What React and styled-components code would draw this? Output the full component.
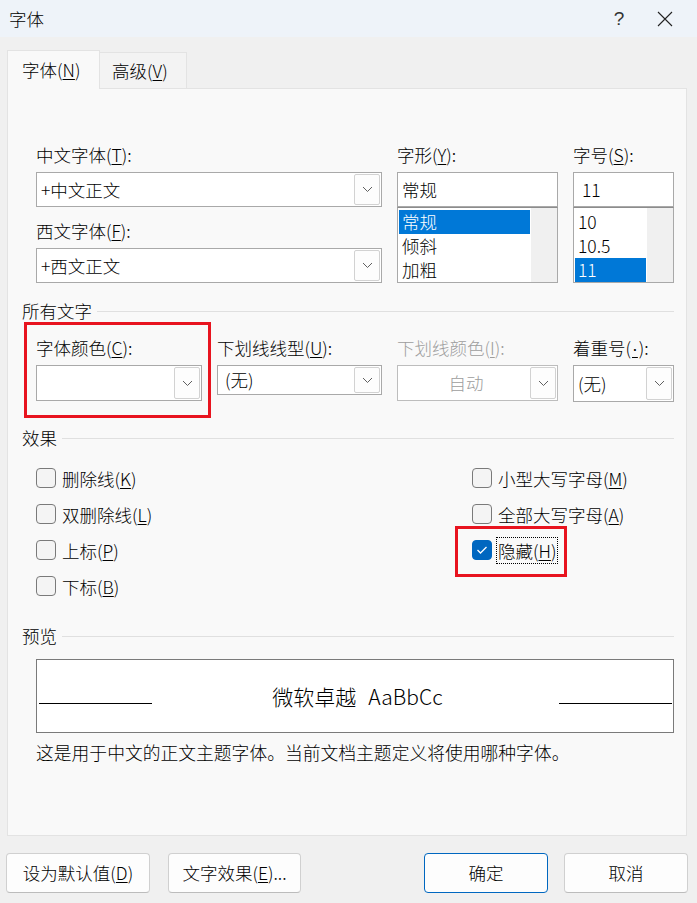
import React from 'react';
import styled, { createGlobalStyle, css } from 'styled-components';

const FONT = `"Noto Sans CJK SC", "Noto Sans", sans-serif`;

const Global = createGlobalStyle`
  html, body { margin: 0; padding: 0; background: #f0f0f0; }
  body { font-family: ${FONT}; font-size: 17.5px; font-weight: 300; color: #000; }
  * { box-sizing: border-box; }
  u { text-underline-offset: 2px; text-decoration-thickness: 1px; }
`;

const Window = styled.div`
  width: 697px;
  height: 903px;
  display: flex;
  flex-direction: column;
  background: #f0f0f0;
  overflow: hidden;
`;

const TitleBar = styled.div`
  height: 37px;
  flex: none;
  background: #eef3f9;
  display: flex;
  align-items: center;
  padding-left: 9px;
  padding-right: 9px;
`;

const Title = styled.div`
  flex: 1;
  line-height: 22px;
`;

const TitleButton = styled.div`
  width: 46px;
  height: 37px;
  display: flex;
  align-items: center;
  justify-content: center;
  font-family: "Liberation Sans", sans-serif;
  font-size: 19px;
  color: #333;
`;

const Body = styled.div`
  padding: 13px 0 0 7px;
  display: flex;
  flex-direction: column;
`;

const TabRow = styled.div`
  height: 38px;
  display: flex;
  align-items: flex-end;
  position: relative;
  z-index: 1;
`;

const Tab = styled.div`
  display: flex;
  align-items: center;
  border: 1px solid #e3e3e3;
  line-height: 22px;
  ${(p) =>
    p.$active
      ? css`
          height: 39px;
          margin-bottom: -1px;
          background: #f9f9f9;
          border-bottom: none;
          padding: 0 14px 0 14px;
          width: 93px;
        `
      : css`
          height: 36px;
          background: #f3f3f3;
          border-left: none;
          border-bottom: none;
          padding: 0 12px;
          width: 87px;
        `}
`;

const Panel = styled.div`
  width: 680px;
  height: 748px;
  background: #f9f9f9;
  border: 1px solid #e3e3e3;
  padding: 55px 12px 0 14px;
  display: flex;
  flex-direction: column;
`;

const FieldGrid = styled.div`
  margin-left: 14px;
  display: grid;
  grid-template-columns: 166px 165px 161px 101px;
  column-gap: 15px;
  margin-top: ${(p) => p.$mt || 0}px;
`;

const Column = styled.div`
  display: flex;
  flex-direction: column;
  grid-column: span ${(p) => p.$span || 1};
`;

const Label = styled.div`
  line-height: 22px;
  height: 22px;
  white-space: nowrap;
  color: ${(p) => (p.$disabled ? '#9d9d9d' : '#000')};
  margin-top: ${(p) => p.$mt || 0}px;
  margin-bottom: 6px;
`;

const Dot = styled.span`
  font-family: "Liberation Sans", sans-serif;
  padding: 0 1px;
`;

const Box = styled.div`
  height: ${(p) => p.$h || 35}px;
  background: #fff;
  border: 1px solid ${(p) => (p.$disabled ? '#bdbdbd' : '#a9a9a9')};
  display: flex;
  align-items: center;
  padding-left: ${(p) => (p.$pl != null ? p.$pl : 4)}px;
  line-height: 22px;
  white-space: nowrap;
`;

const BoxText = styled.span`
  flex: 1;
  color: ${(p) => (p.$disabled ? '#9d9d9d' : '#000')};
  text-align: ${(p) => (p.$center ? 'center' : 'left')};
`;

const DropButton = styled.div`
  width: 26px;
  align-self: stretch;
  margin: 1px 1px 1px 0;
  border: 1px solid #d2d2d2;
  border-radius: 2px;
  background: #fdfdfd;
  display: flex;
  align-items: center;
  justify-content: center;
`;

const ListBox = styled.div`
  height: 76px;
  background: #fff;
  border: 1px solid #a9a9a9;
  border-top-color: #8c8c8c;
  display: flex;
`;

const ListItems = styled.div`
  flex: 1;
  padding: 2px 1px;
  display: flex;
  flex-direction: column;
`;

const ListItem = styled.div`
  height: 24px;
  line-height: 24px;
  padding-left: 3px;
  background: ${(p) => (p.$selected ? '#0078d7' : 'transparent')};
  color: ${(p) => (p.$selected ? '#fff' : '#000')};
`;

const ScrollTrack = styled.div`
  width: 26px;
  background: #f0f0f0;
`;

const SectionHeader = styled.div`
  display: flex;
  align-items: center;
  gap: 5px;
  height: 22px;
  line-height: 22px;
  margin-top: ${(p) => p.$mt || 0}px;
  &::after {
    content: '';
    flex: 1;
    height: 1px;
    background: #e0e0e0;
  }
`;

const Annotated = styled.div`
  position: relative;
  &::after {
    content: '';
    position: absolute;
    top: ${(p) => -p.$t}px;
    right: ${(p) => -p.$r}px;
    bottom: ${(p) => -p.$b}px;
    left: ${(p) => -p.$l}px;
    border: 3px solid #e8141f;
    pointer-events: none;
  }
`;

const Effects = styled.div`
  margin-left: 14px;
  margin-top: 11px;
  display: grid;
  grid-template-columns: 436px 1fr;
`;

const EffectColumn = styled.div`
  display: flex;
  flex-direction: column;
  align-items: flex-start;
`;

const CheckRow = styled.div`
  height: 36px;
  display: flex;
  align-items: center;
  gap: 4px;
`;

const CheckBox = styled.div`
  width: 20px;
  height: 20px;
  border-radius: 4px;
  flex: none;
  display: flex;
  align-items: center;
  justify-content: center;
  ${(p) =>
    p.$checked
      ? css`
          background: #0067c0;
          border: 1px solid #0067c0;
        `
      : css`
          background: #f4f4f4;
          border: 1px solid #7a7a7a;
        `}
`;

const CheckLabel = styled.span`
  line-height: 23px;
  padding: 1px;
  border: 1px ${(p) => (p.$focus ? 'dotted #000' : 'solid transparent')};
  white-space: nowrap;
`;

const PreviewBox = styled.div`
  margin: 12px 0 0 14px;
  height: 74px;
  background: #fff;
  border: 1px solid #7a7a7a;
  display: flex;
  align-items: center;
  justify-content: space-between;
  padding: 0 1px 0 2px;
`;

const PreviewRule = styled.div`
  width: 113px;
  height: 1px;
  background: #000;
  margin-top: 14px;
`;

const PreviewText = styled.div`
  font-size: 21px;
  line-height: 28px;
  white-space: nowrap;
  margin-left: 4px;
`;

const Latin = styled.span`
  margin-left: 12px;
`;

const Description = styled.div`
  margin: 8px 0 0 14px;
  line-height: 22px;
  font-size: 17.8px;
  white-space: nowrap;
`;

const Footer = styled.div`
  display: flex;
  justify-content: space-between;
  padding: 17px 9px 0 6px;
`;

const ButtonGroup = styled.div`
  display: flex;
  gap: ${(p) => p.$gap}px;
`;

const Button = styled.div`
  width: ${(p) => p.$w}px;
  height: 40px;
  border-radius: 4px;
  background: #fdfdfd;
  border: 1px solid ${(p) => (p.$primary ? '#0067c0' : '#d0d0d0')};
  border-bottom-color: ${(p) => (p.$primary ? '#0067c0' : '#bcbcbc')};
  display: flex;
  align-items: center;
  justify-content: center;
  line-height: 22px;
  white-space: nowrap;
`;

const Chevron = () => (
  <svg width="11" height="7" viewBox="0 0 11 7">
    <polyline points="1,1 5.5,5.5 10,1" fill="none" stroke="#606060" strokeWidth="1" />
  </svg>
);

const Check = () => (
  <svg width="12" height="10" viewBox="0 0 12 10">
    <polyline points="1.5,5 4.5,8 10.5,2" fill="none" stroke="#fff" strokeWidth="1.3" />
  </svg>
);

const CloseIcon = () => (
  <svg width="16" height="16" viewBox="0 0 16 16">
    <path d="M1 1 L15 15 M15 1 L1 15" stroke="#222" strokeWidth="1.1" fill="none" />
  </svg>
);

const Combo = ({ value, h, pl, disabled, center }) => (
  <Box $h={h} $pl={pl} $disabled={disabled}>
    <BoxText $disabled={disabled} $center={center}>{value}</BoxText>
    <DropButton>
      <Chevron />
    </DropButton>
  </Box>
);

const List = ({ items, selected }) => (
  <ListBox>
    <ListItems>
      {items.map((it) => (
        <ListItem key={it} $selected={it === selected}>
          {it}
        </ListItem>
      ))}
    </ListItems>
    <ScrollTrack />
  </ListBox>
);

const Effect = ({ label, mn, checked, focus }) => (
  <CheckRow>
    <CheckBox $checked={checked}>{checked && <Check />}</CheckBox>
    <CheckLabel $focus={focus}>
      {label}(<u>{mn}</u>)
    </CheckLabel>
  </CheckRow>
);

export default function App() {
  return (
    <>
      <Global />
      <Window>
        <TitleBar>
          <Title>字体</Title>
          <TitleButton>?</TitleButton>
          <TitleButton>
            <CloseIcon />
          </TitleButton>
        </TitleBar>
        <Body>
          <TabRow>
            <Tab $active>
              字体(<u>N</u>)
            </Tab>
            <Tab>
              高级(<u>V</u>)
            </Tab>
          </TabRow>
          <Panel>
            <FieldGrid>
              <Column $span={2}>
                <Label>
                  中文字体(<u>T</u>):
                </Label>
                <Combo value="+中文正文" />
                <Label $mt={13}>
                  西文字体(<u>F</u>):
                </Label>
                <Combo value="+西文正文" />
              </Column>
              <Column>
                <Label>
                  字形(<u>Y</u>):
                </Label>
                <Box>常规</Box>
                <List items={['常规', '倾斜', '加粗']} selected="常规" />
              </Column>
              <Column>
                <Label>
                  字号(<u>S</u>):
                </Label>
                <Box $pl={8}>11</Box>
                <List items={['10', '10.5', '11']} selected="11" />
              </Column>
            </FieldGrid>

            <SectionHeader $mt={17}>所有文字</SectionHeader>

            <FieldGrid $mt={15}>
              <Annotated $t={15} $r={9} $b={16} $l={12}>
                <Column>
                  <Label>
                    字体颜色(<u>C</u>):
                  </Label>
                  <Combo value="" h={36} />
                </Column>
              </Annotated>
              <Column>
                <Label>
                  下划线线型(<u>U</u>):
                </Label>
                <Combo value="(无)" h={30} pl={7} />
              </Column>
              <Column>
                <Label $disabled>
                  下划线颜色(<u>I</u>):
                </Label>
                <Combo value="自动" h={36} disabled center />
              </Column>
              <Column>
                <Label>
                  着重号(<u><Dot>·</Dot></u>):
                </Label>
                <Combo value="(无)" h={37} pl={4} />
              </Column>
            </FieldGrid>

            <SectionHeader $mt={25}>效果</SectionHeader>

            <Effects>
              <EffectColumn>
                <Effect label="删除线" mn="K" />
                <Effect label="双删除线" mn="L" />
                <Effect label="上标" mn="P" />
                <Effect label="下标" mn="B" />
              </EffectColumn>
              <EffectColumn>
                <Effect label="小型大写字母" mn="M" />
                <Effect label="全部大写字母" mn="A" />
                <Annotated $t={6} $r={9} $b={9} $l={17}>
                  <Effect label="隐藏" mn="H" checked focus />
                </Annotated>
              </EffectColumn>
            </Effects>

            <SectionHeader $mt={21}>预览</SectionHeader>
            <PreviewBox>
              <PreviewRule />
              <PreviewText>
                微软卓越<Latin>AaBbCc</Latin>
              </PreviewText>
              <PreviewRule />
            </PreviewBox>
            <Description>这是用于中文的正文主题字体。当前文档主题定义将使用哪种字体。</Description>
          </Panel>
        </Body>
        <Footer>
          <ButtonGroup $gap={18}>
            <Button $w={144}>
              设为默认值(<u>D</u>)
            </Button>
            <Button $w={133}>
              文字效果(<u>E</u>)...
            </Button>
          </ButtonGroup>
          <ButtonGroup $gap={16}>
            <Button $w={124} $primary>
              确定
            </Button>
            <Button $w={124}>取消</Button>
          </ButtonGroup>
        </Footer>
      </Window>
    </>
  );
}
